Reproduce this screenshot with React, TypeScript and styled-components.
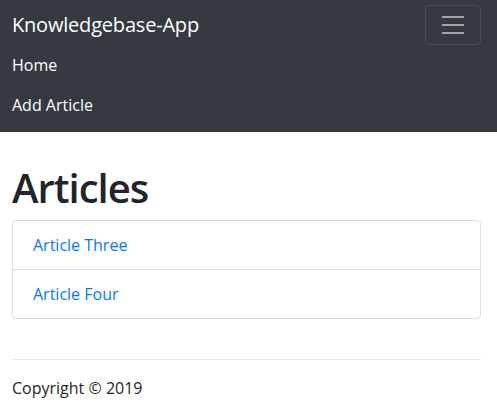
import React from "react";
import styled, { createGlobalStyle } from "styled-components";

const GlobalStyle = createGlobalStyle`
  * { box-sizing: border-box; }
  body {
    margin: 0;
    font-family: "Open Sans", "Noto Sans", sans-serif;
    font-size: 16px;
    line-height: 1.5;
    color: #212529;
    background: #fff;
  }
`;

const Navbar = styled.nav`
  background: #343a40;
  padding: 5px 16px 7px 12px;
`;

const NavTop = styled.div`
  display: flex;
  align-items: center;
  justify-content: space-between;
  height: 40px;
`;

const Brand = styled.a`
  color: #fff;
  font-size: 20px;
  line-height: 30px;
  letter-spacing: -0.2px;
  text-decoration: none;
`;

const Toggler = styled.button`
  width: 56px;
  height: 40px;
  padding: 4px 12px;
  background: transparent;
  border: 1px solid rgba(255, 255, 255, 0.1);
  border-radius: 4px;
  display: flex;
  align-items: center;
  justify-content: center;
`;

const NavList = styled.ul`
  list-style: none;
  margin: 0;
  padding: 0;
  display: flex;
  flex-direction: column;
`;

const NavLink = styled.a`
  display: block;
  padding: 8px 0;
  color: #fff;
  text-decoration: none;
  line-height: 24px;
`;

const Main = styled.main`
  padding: 32px 16px 0 12px;
`;

const Heading = styled.h1`
  margin: 0 0 8px;
  font-size: 40px;
  font-weight: 600;
  letter-spacing: -1px;
  line-height: 48px;
`;

const ListGroup = styled.ul`
  list-style: none;
  margin: 0;
  padding: 0;
  border: 1px solid rgba(0, 0, 0, 0.125);
  border-radius: 4px;
`;

const ListItem = styled.li<{ $last?: boolean }>`
  padding: 12px 20px;
  line-height: 24px;
  border-bottom: ${(p) => (p.$last ? "none" : "1px solid rgba(0, 0, 0, 0.125)")};
`;

const ItemLink = styled.a`
  color: #007bff;
  text-decoration: none;
`;

const Footer = styled.footer`
  padding-top: 24px;
`;

const Rule = styled.hr`
  margin: 16px 0;
  border: 0;
  border-top: 1px solid rgba(0, 0, 0, 0.1);
`;

const Copy = styled.p`
  margin: 0;
`;

const TogglerIcon = () => (
  <svg width="30" height="30" viewBox="0 0 30 30">
    <path
      d="M4 7h22M4 15h22M4 23h22"
      stroke="rgba(255,255,255,0.55)"
      strokeWidth="2"
      strokeMiterlimit="10"
    />
  </svg>
);

const articles = ["Article Three", "Article Four"];

export default function App() {
  return (
    <>
      <GlobalStyle />
      <Navbar>
        <NavTop>
          <Brand href="#">Knowledgebase-App</Brand>
          <Toggler aria-label="Toggle navigation">
            <TogglerIcon />
          </Toggler>
        </NavTop>
        <NavList>
          <li>
            <NavLink href="#">Home</NavLink>
          </li>
          <li>
            <NavLink href="#">Add Article</NavLink>
          </li>
        </NavList>
      </Navbar>
      <Main>
        <Heading>Articles</Heading>
        <ListGroup>
          {articles.map((a, i) => (
            <ListItem key={a} $last={i === articles.length - 1}>
              <ItemLink href="#">{a}</ItemLink>
            </ListItem>
          ))}
        </ListGroup>
        <Footer>
          <Rule />
          <Copy>Copyright © 2019</Copy>
        </Footer>
      </Main>
    </>
  );
}
